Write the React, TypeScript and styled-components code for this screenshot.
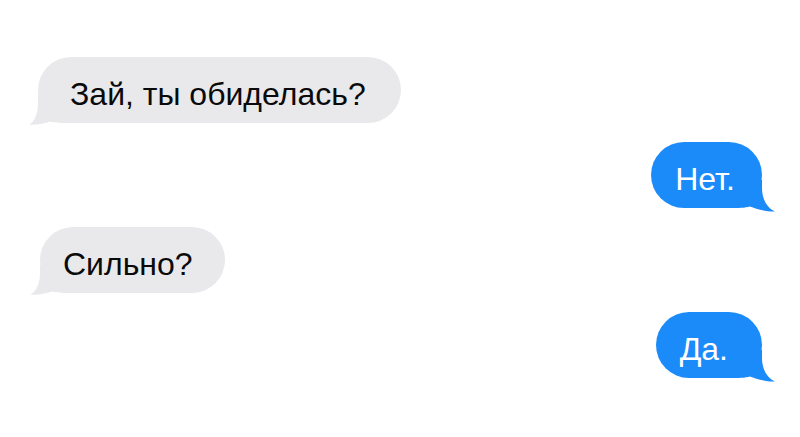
import React from "react"
import styled, { createGlobalStyle } from "styled-components"

const GlobalStyle = createGlobalStyle`
  html, body {
    margin: 0;
    padding: 0;
    background: #ffffff;
  }
  body {
    font-family: "Liberation Sans", Arial, Helvetica, sans-serif;
  }
`

const GRAY = "#e9e9eb"
const BLUE = "#1b8bf9"

const Thread = styled.div`
  width: 800px;
  height: 437px;
  box-sizing: border-box;
  padding: 57px 38px 0 38px;
  display: flex;
  flex-direction: column;
  gap: 19px;
  background: #ffffff;
  overflow: hidden;
`

const Row = styled.div<{ $mine?: boolean; $shift: number }>`
  display: flex;
  justify-content: ${(p) => (p.$mine ? "flex-end" : "flex-start")};
  padding: ${(p) => (p.$mine ? `0 ${p.$shift}px 0 0` : `0 0 0 ${p.$shift}px`)};
`

const Bubble = styled.div<{ $mine?: boolean; $pl: number; $pr: number }>`
  position: relative;
  box-sizing: border-box;
  height: 66px;
  display: flex;
  align-items: center;
  padding: 0 ${(p) => p.$pr}px 0 ${(p) => p.$pl}px;
  border-radius: 33px;
  background: ${(p) => (p.$mine ? BLUE : GRAY)};
  color: ${(p) => (p.$mine ? "#ffffff" : "#0a0a0a")};
  font-size: 32px;
  line-height: 1;
  white-space: nowrap;
`

const Text = styled.span`
  position: relative;
  z-index: 1;
  padding-top: 7px;
`

const TailSvg = styled.svg<{ $mine?: boolean; $reach: number; $drop: number }>`
  position: absolute;
  bottom: ${(p) => -p.$drop}px;
  ${(p) => (p.$mine ? `right: ${-p.$reach}px;` : `left: ${-p.$reach}px;`)}
`

// tail in bubble-relative coords: x = 0 is the bubble side, negative is outside
const Tail = ({ mine, reach, drop }: { mine?: boolean; reach: number; drop: number }) => {
  const inner = 34
  const w = reach + inner
  const h = 28 + drop
  const b = 28 // bubble bottom line inside the svg
  const X = (x: number) => (mine ? inner - x : reach + x)
  const d = [
    `M ${X(0)} 0`,
    `L ${X(0)} 8`,
    `C ${X(0)} 19, ${X(-reach * 0.4)} ${b - 2 + drop * 0.6}, ${X(-reach)} ${h - 0.5}`,
    `C ${X(-reach + 8)} ${h}, ${X(6)} ${b + 1}, ${X(12)} ${b - 1.5}`,
    `C ${X(17)} ${b}, ${X(23)} ${b}, ${X(inner)} ${b}`,
    `L ${X(inner)} 0 Z`,
  ].join(" ")
  return (
    <TailSvg $mine={mine} $reach={reach} $drop={drop} width={w} height={h} viewBox={`0 0 ${w} ${h}`}>
      <path d={d} fill={mine ? BLUE : GRAY} />
    </TailSvg>
  )
}

const messages = [
  { text: "Зай, ты обиделась?", mine: false, shift: 0, pl: 32, pr: 35, reach: 9, drop: 2 },
  { text: "Нет.", mine: true, shift: 0, pl: 24, pr: 27, reach: 13, drop: 4 },
  { text: "Сильно?", mine: false, shift: 2, pl: 23, pr: 32, reach: 10, drop: 2 },
  { text: "Да.", mine: true, shift: 0, pl: 24, pr: 34, reach: 13, drop: 4 },
]

const App: React.FC = () => {
  return (
    <>
      <GlobalStyle />
      <Thread>
        {messages.map((m, i) => (
          <Row key={i} $mine={m.mine} $shift={m.shift}>
            <Bubble $mine={m.mine} $pl={m.pl} $pr={m.pr}>
              <Tail mine={m.mine} reach={m.reach} drop={m.drop} />
              <Text>{m.text}</Text>
            </Bubble>
          </Row>
        ))}
      </Thread>
    </>
  )
}

export default App
